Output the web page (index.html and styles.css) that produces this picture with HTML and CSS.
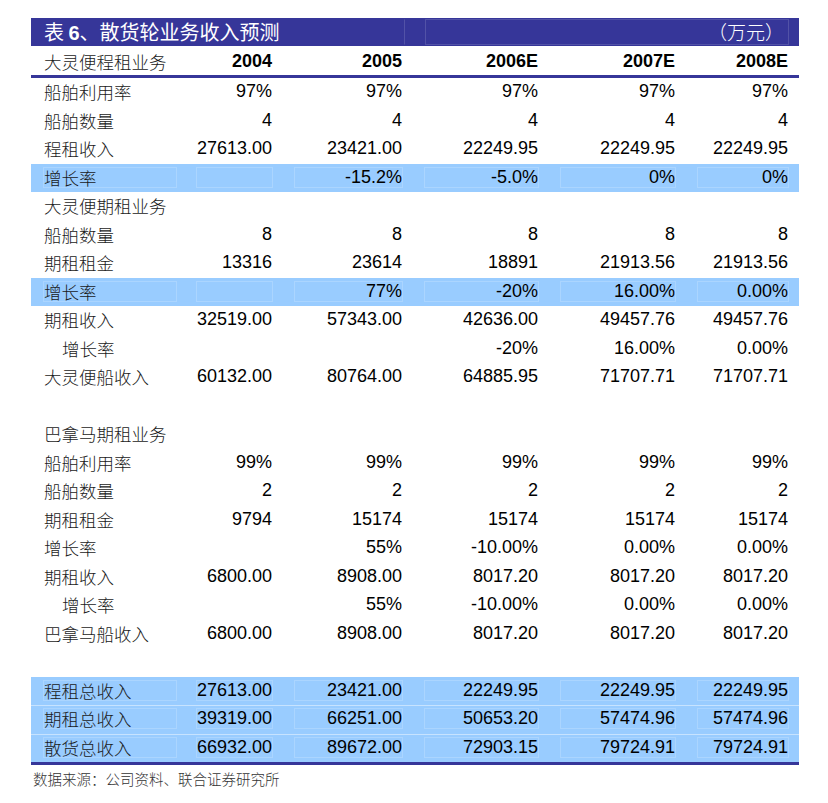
FILE: index.html
```html
<!DOCTYPE html>
<html lang="zh">
<head>
<meta charset="utf-8">
<title>表 6、散货轮业务收入预测</title>
<link rel="stylesheet" href="styles.css">
</head>
<body>
<div class="sheet">
  <div class="title">
    <div class="tcell tleft"><span>表 <b>6</b>、散货轮业务收入预测</span></div>
    <div class="tcell tright"><span>（万元）</span></div>
  </div>
  <div class="row head">
    <div class="c lab"><span>大灵便程租业务</span></div>
    <div class="c"><span>2004</span></div>
    <div class="c"><span>2005</span></div>
    <div class="c"><span>2006E</span></div>
    <div class="c"><span>2007E</span></div>
    <div class="c"><span>2008E</span></div>
  </div>
  <div class="body">
    <div class="row"><div class="c lab"><span>船舶利用率</span></div><div class="c"><span>97%</span></div><div class="c"><span>97%</span></div><div class="c"><span>97%</span></div><div class="c"><span>97%</span></div><div class="c"><span>97%</span></div></div>
    <div class="row"><div class="c lab"><span>船舶数量</span></div><div class="c"><span>4</span></div><div class="c"><span>4</span></div><div class="c"><span>4</span></div><div class="c"><span>4</span></div><div class="c"><span>4</span></div></div>
    <div class="row"><div class="c lab"><span>程租收入</span></div><div class="c"><span>27613.00</span></div><div class="c"><span>23421.00</span></div><div class="c"><span>22249.95</span></div><div class="c"><span>22249.95</span></div><div class="c"><span>22249.95</span></div></div>
    <div class="row hi"><div class="c lab"><span>增长率</span></div><div class="c"><span></span></div><div class="c"><span>-15.2%</span></div><div class="c"><span>-5.0%</span></div><div class="c"><span>0%</span></div><div class="c"><span>0%</span></div></div>
    <div class="row"><div class="c lab"><span>大灵便期租业务</span></div><div class="c"><span></span></div><div class="c"><span></span></div><div class="c"><span></span></div><div class="c"><span></span></div><div class="c"><span></span></div></div>
    <div class="row"><div class="c lab"><span>船舶数量</span></div><div class="c"><span>8</span></div><div class="c"><span>8</span></div><div class="c"><span>8</span></div><div class="c"><span>8</span></div><div class="c"><span>8</span></div></div>
    <div class="row"><div class="c lab"><span>期租租金</span></div><div class="c"><span>13316</span></div><div class="c"><span>23614</span></div><div class="c"><span>18891</span></div><div class="c"><span>21913.56</span></div><div class="c"><span>21913.56</span></div></div>
    <div class="row hi"><div class="c lab"><span>增长率</span></div><div class="c"><span></span></div><div class="c"><span>77%</span></div><div class="c"><span>-20%</span></div><div class="c"><span>16.00%</span></div><div class="c"><span>0.00%</span></div></div>
    <div class="row"><div class="c lab"><span>期租收入</span></div><div class="c"><span>32519.00</span></div><div class="c"><span>57343.00</span></div><div class="c"><span>42636.00</span></div><div class="c"><span>49457.76</span></div><div class="c"><span>49457.76</span></div></div>
    <div class="row"><div class="c lab ind"><span>增长率</span></div><div class="c"><span></span></div><div class="c"><span></span></div><div class="c"><span>-20%</span></div><div class="c"><span>16.00%</span></div><div class="c"><span>0.00%</span></div></div>
    <div class="row"><div class="c lab"><span>大灵便船收入</span></div><div class="c"><span>60132.00</span></div><div class="c"><span>80764.00</span></div><div class="c"><span>64885.95</span></div><div class="c"><span>71707.71</span></div><div class="c"><span>71707.71</span></div></div>
    <div class="row blank"></div>
    <div class="row"><div class="c lab"><span>巴拿马期租业务</span></div><div class="c"><span></span></div><div class="c"><span></span></div><div class="c"><span></span></div><div class="c"><span></span></div><div class="c"><span></span></div></div>
    <div class="row"><div class="c lab"><span>船舶利用率</span></div><div class="c"><span>99%</span></div><div class="c"><span>99%</span></div><div class="c"><span>99%</span></div><div class="c"><span>99%</span></div><div class="c"><span>99%</span></div></div>
    <div class="row"><div class="c lab"><span>船舶数量</span></div><div class="c"><span>2</span></div><div class="c"><span>2</span></div><div class="c"><span>2</span></div><div class="c"><span>2</span></div><div class="c"><span>2</span></div></div>
    <div class="row"><div class="c lab"><span>期租租金</span></div><div class="c"><span>9794</span></div><div class="c"><span>15174</span></div><div class="c"><span>15174</span></div><div class="c"><span>15174</span></div><div class="c"><span>15174</span></div></div>
    <div class="row"><div class="c lab"><span>增长率</span></div><div class="c"><span></span></div><div class="c"><span>55%</span></div><div class="c"><span>-10.00%</span></div><div class="c"><span>0.00%</span></div><div class="c"><span>0.00%</span></div></div>
    <div class="row"><div class="c lab"><span>期租收入</span></div><div class="c"><span>6800.00</span></div><div class="c"><span>8908.00</span></div><div class="c"><span>8017.20</span></div><div class="c"><span>8017.20</span></div><div class="c"><span>8017.20</span></div></div>
    <div class="row"><div class="c lab ind"><span>增长率</span></div><div class="c"><span></span></div><div class="c"><span>55%</span></div><div class="c"><span>-10.00%</span></div><div class="c"><span>0.00%</span></div><div class="c"><span>0.00%</span></div></div>
    <div class="row"><div class="c lab"><span>巴拿马船收入</span></div><div class="c"><span>6800.00</span></div><div class="c"><span>8908.00</span></div><div class="c"><span>8017.20</span></div><div class="c"><span>8017.20</span></div><div class="c"><span>8017.20</span></div></div>
    <div class="row blank"></div>
    <div class="totals">
      <div class="row hi"><div class="c lab"><span>程租总收入</span></div><div class="c"><span>27613.00</span></div><div class="c"><span>23421.00</span></div><div class="c"><span>22249.95</span></div><div class="c"><span>22249.95</span></div><div class="c"><span>22249.95</span></div></div>
      <div class="row hi"><div class="c lab"><span>期租总收入</span></div><div class="c"><span>39319.00</span></div><div class="c"><span>66251.00</span></div><div class="c"><span>50653.20</span></div><div class="c"><span>57474.96</span></div><div class="c"><span>57474.96</span></div></div>
      <div class="row hi"><div class="c lab"><span>散货总收入</span></div><div class="c"><span>66932.00</span></div><div class="c"><span>89672.00</span></div><div class="c"><span>72903.15</span></div><div class="c"><span>79724.91</span></div><div class="c"><span>79724.91</span></div></div>
    </div>
  </div>
  <div class="source">数据来源：公司资料、联合证券研究所</div>
</div>
</body>
</html>
```

FILE: styles.css
```css
html, body {
  margin: 0;
  padding: 0;
  background: #ffffff;
}

.sheet {
  width: 768px;
  margin: 18px 0 0 31px;
  font-family: "Liberation Sans", Arial, "Noto Sans CJK SC", sans-serif;
  color: #000;
}

.title {
  display: grid;
  grid-template-columns: 382px 386px;
  height: 28px;
  background: #363699;
  color: #ffffff;
}

.tcell {
  padding: 1px 10px 1px 12px;
}

.tcell span {
  display: block;
  height: 24px;
  line-height: 24px;
  border: 1px solid rgba(255, 255, 255, 0.14);
  font-family: "Noto Sans CJK SC", sans-serif;
  font-size: 20px;
  white-space: nowrap;
}

.tcell b {
  font-family: "Liberation Sans", Arial, sans-serif;
  font-weight: bold;
}

.tleft span {
  margin-right: -2px;
  border-left-color: transparent;
  border-top-color: transparent;
  border-bottom-color: transparent;
}

.tright span {
  text-align: right;
  padding-right: 4px;
  font-size: 19px;
  font-weight: 300;
}

.row {
  display: grid;
  grid-template-columns: 154px 98px 130px 136px 137px 113px;
  height: 28.5px;
}

.head {
  height: 29px;
  border-bottom: 3px solid #363699;
}

.head .c {
  padding-top: 5px;
  padding-bottom: 3px;
}

.head .c span {
  font-weight: bold;
}

.head .lab span {
  font-weight: 300;
}

.c {
  padding: 3px 10px 5px 11px;
  box-sizing: border-box;
  height: 100%;
}

.c span {
  display: block;
  height: 100%;
  box-sizing: border-box;
  border: 1px solid transparent;
  text-align: right;
  font-size: 18px;
  line-height: 19px;
  white-space: nowrap;
}

.lab {
  padding-left: 12px;
  padding-right: 8px;
}

.lab span {
  text-align: left;
  font-family: "Noto Sans CJK SC", sans-serif;
  font-weight: 300;
  font-size: 17.5px;
  color: #1a1a1a;
}

.ind span {
  padding-left: 18px;
}

.hi {
  background: #99ccff;
}

.hi .c span {
  border-color: rgba(255, 255, 255, 0.18);
}

.totals {
  border-bottom: 3px solid #363699;
}

.totals .row + .row {
  box-shadow: inset 0 1px 0 rgba(255, 255, 255, 0.45);
}

.source {
  margin-top: 4px;
  margin-left: 2px;
  font-family: "Noto Sans CJK SC", sans-serif;
  font-weight: 300;
  font-size: 14.5px;
  line-height: 20px;
  color: #333;
}
```
